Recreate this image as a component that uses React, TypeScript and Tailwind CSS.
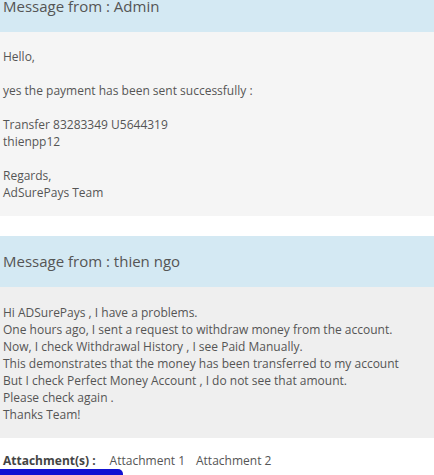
import React from "react";

const font = { fontFamily: '"Open Sans", sans-serif' };

function Header({ title }: { title: string }) {
  return (
    <div className="bg-[#d4e9f3] pl-[3px] py-[15px] text-[15px] leading-[21px] text-[#555555]">
      {title}
    </div>
  );
}

export default function App() {
  return (
    <div className="w-[434px] h-[475px] overflow-hidden bg-white" style={font}>
      <div className="-mt-[19px]">
        <Header title="Message from : Admin" />
        <div className="bg-[#f5f5f5] pl-[3px] pt-[16px] pb-[15px] text-[12px] leading-[17px] text-[#555555]">
          Hello,
          <br />
          <br />
          yes the payment has been sent successfully :
          <br />
          <br />
          Transfer 83283349 U5644319
          <br />
          thienpp12
          <br />
          <br />
          Regards,
          <br />
          AdSurePays Team
        </div>
        <div className="h-[20px]" />
        <Header title="Message from : thien ngo" />
        <div className="bg-[#efefef] pl-[3px] pt-[17px] pb-[15px] text-[12px] leading-[17px] text-[#555555]">
          Hi ADSurePays , I have a problems.
          <br />
          One hours ago, I sent a request to withdraw money from the account.
          <br />
          Now, I check Withdrawal History , I see Paid Manually.
          <br />
          This demonstrates that the money has been transferred to my account
          <br />
          But I check Perfect Money Account , I do not see that amount.
          <br />
          Please check again .
          <br />
          Thanks Team!
        </div>
        <div className="flex items-center pl-[3px] pt-[14px] text-[12px] leading-[17px] text-[#555555]">
          <span className="font-bold text-[#444444]">Attachment(s) :</span>
          <span className="ml-[14px]">Attachment 1</span>
          <span className="ml-[11px]">Attachment 2</span>
        </div>
        <div className="h-[12px] w-[123px] bg-[#1212d2] rounded-tr-[5px]" />
      </div>
    </div>
  );
}
